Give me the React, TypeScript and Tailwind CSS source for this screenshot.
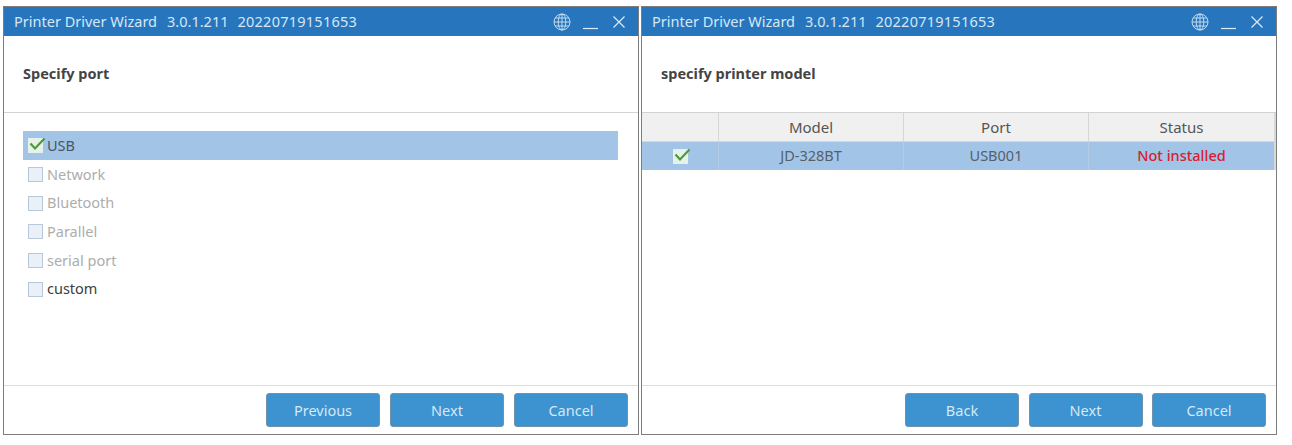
const FONT = "font-['Noto_Sans','Open_Sans',sans-serif]";

function CheckMark() {
  return (
    <svg width="17" height="14" viewBox="0 0 17 14" className="absolute -top-[1px] left-[1px]">
      <path d="M1.5 6.5 L6 11.5 L15.5 1.5" fill="none" stroke="#4c9a3a" strokeWidth="2.2" />
    </svg>
  );
}

function Box({ checked }: { checked?: boolean }) {
  return (
    <span
      className={`relative block h-[15px] w-[15px] shrink-0 ${
        checked ? "bg-[#e6f1ea]" : "border border-[#b9c8d8] bg-[#e9f0f7]"
      }`}
    >
      {checked && <CheckMark />}
    </span>
  );
}

function TitleBar() {
  return (
    <div className="flex h-[29px] shrink-0 items-center bg-[#2776bd] pr-[13px] pl-[10px] text-[14.5px] text-[#d5e6f5]">
      <span>Printer Driver Wizard</span>
      <span className="ml-[10px]">3.0.1.211</span>
      <span className="ml-[9px] tracking-[0.25px]">20220719151653</span>
      <span className="flex-1" />
      <svg width="18" height="18" viewBox="0 0 18 18" fill="none" stroke="#cfe2f3" strokeWidth="0.9">
        <circle cx="9" cy="9" r="8" />
        <ellipse cx="9" cy="9" rx="3.8" ry="8" />
        <path d="M9 1v16M1 9h16M2 5h14M2 13h14" />
      </svg>
      <svg width="15" height="18" viewBox="0 0 15 18" className="ml-[12px]" stroke="#dcebf7" strokeWidth="1.2">
        <path d="M0 15.5h15" />
      </svg>
      <svg width="12" height="12" viewBox="0 0 12 12" className="ml-[15px]" fill="none" stroke="#dcebf7" strokeWidth="1.2">
        <path d="M0.5 0.5l11 11M11.5 0.5l-11 11" />
      </svg>
    </div>
  );
}

function WizardButton({ label }: { label: string }) {
  return (
    <button
      type="button"
      className="h-[34px] w-[114px] rounded-[3px] border border-[#6f92ad] bg-[#3d93d0] pt-[1px] text-[14.5px] text-[#d4e8f6]"
    >
      {label}
    </button>
  );
}

function Window({
  heading,
  buttons,
  className,
  footerGap,
  children,
}: {
  heading: string;
  buttons: string[];
  className: string;
  footerGap: string;
  children: React.ReactNode;
}) {
  return (
    <div className={`flex h-[429px] flex-col border border-[#7d7d7d] bg-white ${className}`}>
      <TitleBar />
      <div className="flex h-[77px] shrink-0 items-center border-b border-[#d2d2d2] pl-[19px] text-[14.5px] font-bold text-[#444]">
        {heading}
      </div>
      <div className="min-h-0 flex-1">{children}</div>
      <div className={`flex h-[49px] shrink-0 items-center justify-end border-t border-[#dcdcdc] pr-[10px] ${footerGap}`}>
        {buttons.map((b) => (
          <WizardButton key={b} label={b} />
        ))}
      </div>
    </div>
  );
}

const PORTS = [
  { label: "USB", checked: true, selected: true, text: "text-[#4a5560]" },
  { label: "Network", text: "text-[#adadad]" },
  { label: "Bluetooth", text: "text-[#adadad]" },
  { label: "Parallel", text: "text-[#adadad]" },
  { label: "serial port", text: "text-[#adadad]" },
  { label: "custom", text: "text-[#3c3c3c]" },
];

function PortList() {
  return (
    <div className="flex flex-col pt-[18px] pr-[20px] pl-[19px]">
      {PORTS.map((p) => (
        <div
          key={p.label}
          className={`flex h-[28.7px] items-center gap-[4px] pt-[1px] pl-[5px] text-[14.5px] ${p.text} ${
            p.selected ? "bg-[#a2c5e7]" : ""
          }`}
        >
          <Box checked={p.checked} />
          <span>{p.label}</span>
        </div>
      ))}
    </div>
  );
}

function ModelTable() {
  const headCell = "flex items-center justify-center border-r border-[#d6d6d6] pt-[1px]";
  const rowCell = "flex items-center justify-center border-r border-[#b4cde6]";
  return (
    <div className="text-[14.5px]">
      <div className="grid h-[29px] grid-cols-[77px_185px_185px_1fr] border-r-2 border-b border-[#d8d8d8] bg-[#f0f0f0] text-[15px] text-[#555]">
        <div className={headCell} />
        <div className={headCell}>Model</div>
        <div className={headCell}>Port</div>
        <div className="flex items-center justify-center pt-[1px]">Status</div>
      </div>
      <div className="grid h-[28px] grid-cols-[77px_185px_185px_1fr] border-r-2 border-[#d8d8d8] bg-[#a2c5e7] text-[#555f6b]">
        <div className={rowCell}>
          <Box checked />
        </div>
        <div className={rowCell}>JD-328BT</div>
        <div className={rowCell}>USB001</div>
        <div className="flex items-center justify-center font-medium text-[#d8202f]">Not installed</div>
      </div>
    </div>
  );
}

export default function App() {
  return (
    <div className={`flex h-[445px] w-[1292px] gap-[2px] bg-white pt-[6px] pl-[3px] ${FONT}`}>
      <Window className="w-[636px]" footerGap="gap-[10px]" heading="Specify port" buttons={["Previous", "Next", "Cancel"]}>
        <PortList />
      </Window>
      <Window className="w-[636px]" footerGap="gap-[9.5px]" heading="specify printer model" buttons={["Back", "Next", "Cancel"]}>
        <ModelTable />
      </Window>
    </div>
  );
}
